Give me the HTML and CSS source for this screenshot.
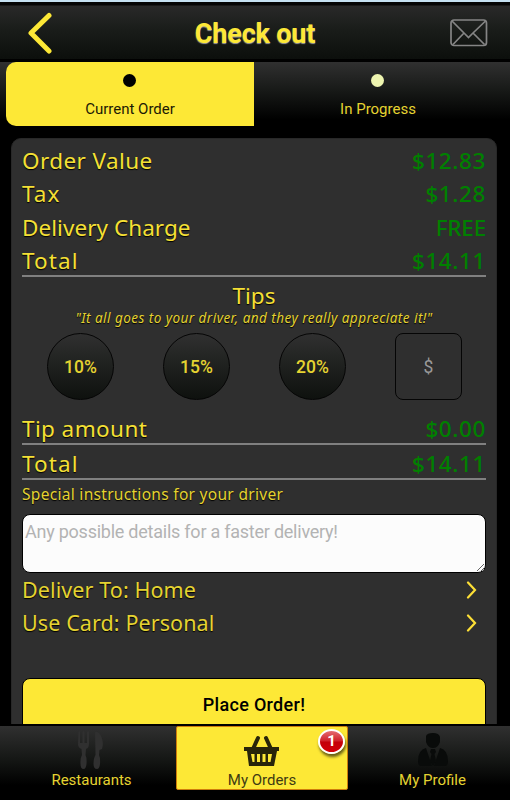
FILE: index.html
```html
<!DOCTYPE html>
<html lang="en">
<head>
  <meta charset="UTF-8">
  <title>Check out</title>
  <link rel="stylesheet" href="styles.css">
</head>
<body>

<div class="header">
  <svg class="back" width="26" height="44" viewBox="0 0 26 44"><path d="M23 4.500 L5 22 L23 40" /></svg>
  <h1>Check out</h1>
  <svg class="mail" width="38" height="28" viewBox="0 0 38 28">
    <rect x="1" y="1" width="35.500" height="25.500" rx="3" />
    <path d="M2 2 L14 14 L18.500 18.500 L23 14 L35.500 2 M3 25.500 L14 14 M34.500 25.500 L23 14" />
  </svg>
</div>

<div class="tabs">
  <div class="tab active"><span class="dot"></span>Current Order</div>
  <div class="tab"><span class="dot"></span>In Progress</div>
</div>

<div class="content">
  <div class="panel">
    <div class="row"><span class="value">Order Value</span><span class="price">$12.83</span></div>
    <div class="row"><span class="short">Tax</span><span class="price">$1.28</span></div>
    <div class="row"><span class="charge">Delivery Charge</span><span class="price free">FREE</span></div>
    <div class="row line"><span class="short">Total</span><span class="price">$14.11</span></div>

    <h2>Tips</h2>
    <p class="quote">"It all goes to your driver, and they really appreciate it!"</p>
    <div class="tips">
      <button class="tip">10%</button>
      <button class="tip">15%</button>
      <button class="tip">20%</button>
      <button class="tip custom">$</button>
    </div>

    <div class="row line amount"><span class="value">Tip amount</span><span class="price">$0.00</span></div>
    <div class="row line total"><span class="short">Total</span><span class="price">$14.11</span></div>
    <p class="special">Special instructions for your driver</p>
    <textarea placeholder="Any possible details for a faster delivery!"></textarea>

    <div class="row link"><span>Deliver To: Home</span><svg width="12" height="18" viewBox="0 0 12 18"><path d="M2 1.500 L9 9 L2 16.500" /></svg></div>
    <div class="row link"><span>Use Card: Personal</span><svg width="12" height="18" viewBox="0 0 12 18"><path d="M2 1.500 L9 9 L2 16.500" /></svg></div>
    <button class="order">Place Order!</button>
  </div>
</div>

<div class="nav">
  <div class="item">
    <svg class="fork" width="28" height="40" viewBox="0 0 28 40">
      <path d="M1.500 2 Q2 0 3 2 V13 H5.500 V2 Q6.500 0 7.500 2 V13 H10 V2 Q11 0 12 2 V14 Q12 18 9 19 L8.500 25 Q10 28 9.500 34 Q9 39 6.500 39 Q3.500 39 3.500 34 Q3 28 5 25 L4.500 19 Q1 18 1 14 Z" />
      <path d="M18 2 Q22 1 24.500 7 Q27 13 25 19 L22.500 20 L22 25 Q23.500 28 23 34 Q22.500 39 20 39 Q16.500 39 16.500 34 Q16.500 28 18.500 25 Z" />
    </svg>
    <span>Restaurants</span>
  </div>
  <div class="item active">
    <svg class="basket" width="36" height="32" viewBox="0 0 36 32">
      <path class="handle" d="M9 14 L14 3 M27 14 L22 3" />
      <path fill-rule="evenodd" d="M0 12 H35 V16 H33 L30 31 H5 L3 16 H0 Z M7 19 L8.500 27 H10.500 V19 Z M13 19 V27 H16 V19 Z M18.500 19 V27 H21.500 V19 Z M24 19 V27 H26.500 L28 19 Z" />
    </svg>
    <span>My Orders</span>
    <span class="badge">1</span>
  </div>
  <div class="item">
    <svg class="person" width="32" height="36" viewBox="0 0 32 36">
      <path d="M9 4 Q10 1 16 1 Q22 1 23 5 V10 Q21 16 16 16 Q11 16 9 10 Z" />
      <path d="M9 16 L15 34 H4 Q1 34 1 29 Q1 18 9 16 Z M23 16 L17 34 H28 Q31 34 31 29 Q31 18 23 16 Z M14 17 H18 L19 20 L17.500 22 L19 29 L16 34 L13 29 L14.500 22 L13 20 Z" />
    </svg>
    <span>My Profile</span>
  </div>
</div>

</body>
</html>
```
FILE: styles.css
```css
* { box-sizing: border-box; }
body {
  margin: 0;
  height: 800px;
  display: flex;
  flex-direction: column;
  overflow: hidden;
  font-family: Roboto, sans-serif;
  background: #000;
  color: #f5e035;
}
h1, h2, p { margin: 0; }
svg { display: block; fill: none; }
button { font-family: inherit; padding: 0; }

.header {
  height: 62px;
  flex: none;
  display: flex;
  align-items: center;
  justify-content: space-between;
  padding: 5px 22px 0 26px;
  border-top: 2px solid #c5e0f2;
  border-bottom: 3px solid #000;
  background: linear-gradient(#050505 3px, #292929 4px, #191c19 50%, #0c0f0c 100%);
}
.header h1 {
  padding: 2px 0 0 8px;
  color: #fde836;
  font-size: 27px;
  line-height: 32px;
  letter-spacing: -0.2px;
  text-shadow: 0 1px 1px #999;
}
.back { stroke: #fde836; stroke-width: 5; stroke-linecap: round; stroke-linejoin: round; }
.mail { stroke: #858585; stroke-width: 1.7; }

.tabs {
  height: 64px;
  flex: none;
  display: flex;
  padding: 0 8px 0 6px;
  background: linear-gradient(#303030, #171917 45%, #000 90%);
}
.tab {
  flex: 1;
  display: flex;
  flex-direction: column;
  align-items: center;
  padding-top: 12px;
  font-size: 15px;
  line-height: 18px;
  color: #e5d331;
}
.tab.active {
  background: #fde836;
  color: #1c1a05;
  border-radius: 10px 0 0 10px;
}
.dot {
  width: 13px;
  height: 13px;
  margin: 0 2px 13px 0;
  border-radius: 50%;
  background: #edf4af;
}
.active .dot { background: #000; }

.content {
  height: 598px;
  flex: none;
  padding: 12px 13px 0 11px;
  overflow: hidden;
}
.panel {
  height: 620px;
  padding: 5px 10px 0;
  border: 1px solid #282828;
  border-radius: 10px;
  background: #2f2f2f;
  font-family: "Noto Sans", sans-serif;
}
.row {
  display: flex;
  justify-content: space-between;
  height: 33.3px;
  font-size: 22.5px;
  line-height: 33px;
  text-shadow: 0 1px 1px #000;
}
.line { border-bottom: 2px solid #808080; }
.value { letter-spacing: 0.4px; }
.charge { letter-spacing: 0.05px; }
.short { letter-spacing: 1.1px; }
.price {
  color: #008000;
  font-weight: 500;
  letter-spacing: 0.6px;
  text-shadow: none;
}
.price.free { letter-spacing: -0.2px; }
h2 {
  padding-top: 4px;
  font-size: 22.5px;
  font-weight: normal;
  line-height: 30px;
  text-align: center;
  text-shadow: 0 1px 1px #000;
}
.quote {
  font-size: 13.5px;
  font-style: italic;
  line-height: 14px;
  letter-spacing: 0.46px;
  text-align: center;
  white-space: nowrap;
  color: #e5d331;
  text-shadow: 0 1px 1px #000;
}
.tips {
  display: flex;
  justify-content: space-between;
  padding: 8px 24px 0 25px;
}
.tip {
  width: 67px;
  height: 67px;
  border: 1.5px solid #050505;
  border-radius: 50%;
  background: linear-gradient(#303030, #202220 45%, #0e110e);
  color: #e5d331;
  font-family: Roboto, sans-serif;
  font-size: 17.5px;
  font-weight: 500;
}
.tip.custom {
  border-radius: 8px;
  background: none;
  color: #999;
  font-weight: normal;
}
.amount { margin-top: 12px; }
.total { height: 35px; line-height: 37px; }
.special {
  font-size: 15.5px;
  line-height: 29px;
  letter-spacing: 0.3px;
  color: #e5d331;
  text-shadow: 0 1px 1px #000;
}
textarea {
  display: block;
  width: 100%;
  height: 59px;
  margin: 5px 0 -1px;
  padding: 6px 2px;
  border: 1.5px solid #000;
  border-radius: 8px;
  background: #fcfcfc;
  font-family: Roboto, sans-serif;
  font-size: 18px;
  line-height: 22px;
  letter-spacing: -0.24px;
}
textarea::placeholder { color: #b3b3b3; }
.link {
  align-items: center;
  padding-right: 8px;
  color: #e5d331;
  font-size: 21.5px;
  letter-spacing: 0.1px;
}
.link svg { margin-top: 2px; stroke: #fddf36; stroke-width: 2.2; stroke-linecap: round; }
.order {
  display: block;
  width: 100%;
  height: 60px;
  margin-top: 39px;
  padding-bottom: 7px;
  border: 1.5px solid #000;
  border-radius: 8px;
  background: #fde836;
  color: #000;
  font-family: Roboto, sans-serif;
  font-size: 18px;
  font-weight: 500;
  letter-spacing: 0.3px;
}

.nav {
  height: 76px;
  flex: none;
  display: flex;
  padding: 0 0 10px;
  border-top: 2px solid #000;
  background: linear-gradient(#303030, #151715 45%, #000 80%);
}
.item {
  position: relative;
  width: 176px;
  display: flex;
  flex-direction: column;
  align-items: center;
  justify-content: flex-end;
  padding: 0 0 1px 7px;
  font-size: 15px;
  line-height: 18px;
  color: #e5d331;
}
.item.active {
  width: 172px;
  padding: 0;
  border: 1px solid #cf7d0b;
  border-radius: 2px;
  background: #fde836;
  color: #403b13;
}
.item:last-child { width: 162px; }
.fork { fill: #303030; margin: 0 2px 1px 0; }
.basket { fill: #28250a; margin-bottom: 4px; }
.handle { stroke: #28250a; stroke-width: 4; stroke-linecap: round; }
.person { fill: #090b0a; margin-bottom: 3px; }
.badge {
  position: absolute;
  top: 2px;
  right: 2px;
  width: 27px;
  height: 25px;
  border: 2.5px solid #fff;
  border-radius: 50%;
  background: linear-gradient(#e56d70, #cf2028 48%, #c40009 52%, #d20008);
  box-shadow: 1px 3px 3px rgba(0, 0, 0, 0.6);
  color: #fff;
  font-size: 15px;
  font-weight: bold;
  line-height: 20px;
  text-align: center;
}
```
